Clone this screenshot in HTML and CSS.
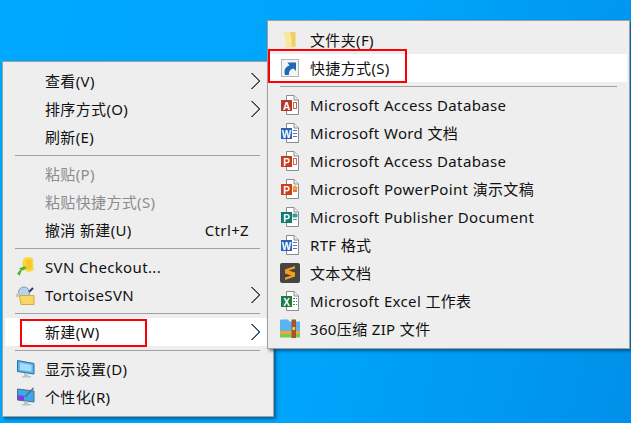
FILE: index.html
```html
<!DOCTYPE html>
<html lang="zh-CN">
<head>
  <meta charset="UTF-8">
  <title>新建</title>
  <meta name="viewport" content="width=device-width, initial-scale=1.0">
  <link rel="stylesheet" href="styles.css">
</head>
<body>

  <svg class="defs" width="0" height="0">
    <defs>
      <symbol id="chev" viewBox="0 0 10 18">
        <polyline points="1,1 9,9 1,17" fill="none" stroke="#e8a070" stroke-width="1"/>
        <polyline points="2,1 10,9 2,17" fill="none" stroke="#4a6a90" stroke-width="1"/>
        <polyline points="1.5,1 9.5,9 1.5,17" fill="none" stroke="#222" stroke-width="1"/>
      </symbol>
      <symbol id="chev-on" viewBox="0 0 10 18">
        <polyline points="1,1 9,9 1,17" fill="none" stroke="#e8a070" stroke-width="1"/>
        <polyline points="2,1 10,9 2,17" fill="none" stroke="#0090e0" stroke-width="1"/>
        <polyline points="1.5,1 9.5,9 1.5,17" fill="none" stroke="#123" stroke-width="1"/>
      </symbol>
      <symbol id="page" viewBox="0 0 20 20">
        <path d="M6.5 0.5H14L18.5 5V19.5H6.5Z" fill="#fff" stroke="#8c8c8c"/>
        <path d="M14 0.5V5H18.5" fill="#eee" stroke="#8c8c8c"/>
      </symbol>
    </defs>
  </svg>

  <div class="desktop">

    <!-- linkes Menue -->
    <div class="menu menu-main">
      <div class="item"><span class="ico"></span><span class="label">查看(V)</span><svg class="arrow"><use href="#chev"/></svg></div>
      <div class="item"><span class="ico"></span><span class="label">排序方式(O)</span><svg class="arrow"><use href="#chev"/></svg></div>
      <div class="item"><span class="ico"></span><span class="label">刷新(E)</span></div>
      <div class="sep"></div>
      <div class="item off"><span class="ico"></span><span class="label">粘贴(P)</span></div>
      <div class="item off"><span class="ico"></span><span class="label">粘贴快捷方式(S)</span></div>
      <div class="item"><span class="ico"></span><span class="label">撤消 新建(U)</span><span class="key">Ctrl+Z</span></div>
      <div class="sep"></div>
      <div class="item">
        <span class="ico">
          <svg width="20" height="20" viewBox="0 0 20 20">
            <path d="M9 1C12 0 16 0 18 1.5L18.5 13C16 15.5 12 15 10 13.5L7 7Z" fill="#fcd63c"/>
            <path d="M11 3H16.5V12H11Z" fill="#f5c728"/>
            <path d="M2 16.5L5.5 12.5L4 11.5L9.5 9L11.5 11L8 13.5L7 13L4.5 19Z" fill="#59b234"/>
          </svg>
        </span>
        <span class="label">SVN Checkout...</span>
      </div>
      <div class="item">
        <span class="ico">
          <svg width="20" height="20" viewBox="0 0 20 20">
            <circle cx="9" cy="7.5" r="5.5" fill="#b5d3ea" stroke="#7f9bb3"/>
            <path d="M14 7L18 3" stroke="#26406e" stroke-width="2"/>
            <path d="M1 9L5 8V12H1Z" fill="#c9c9c9"/>
            <path d="M4.5 10.5H19V19.5H6Z" fill="#f7d767" stroke="#d3ab3c"/>
          </svg>
        </span>
        <span class="label">TortoiseSVN</span>
        <svg class="arrow"><use href="#chev"/></svg>
      </div>
      <div class="sep"></div>
      <div class="item on"><span class="ico"></span><span class="label">新建(W)</span><svg class="arrow"><use href="#chev-on"/></svg></div>
      <div class="sep"></div>
      <div class="item">
        <span class="ico">
          <svg width="20" height="20" viewBox="0 0 20 20">
            <path d="M2.5 1.5L19 4.5V15L2.5 12.5Z" fill="#57b7f0" stroke="#2c6f9e"/>
            <path d="M5 4L16.5 6V12.5L5 11Z" fill="#a5dcfa"/>
            <path d="M9 14H13V17H16V18.5H7V17H9Z" fill="#b8c4cc"/>
          </svg>
        </span>
        <span class="label">显示设置(D)</span>
      </div>
      <div class="item">
        <span class="ico">
          <svg width="20" height="20" viewBox="0 0 20 20">
            <path d="M2.5 2L19 4V15L2.5 13Z" fill="#3ea8ee" stroke="#4c6f85"/>
            <path d="M3 8L9 9V13.5L3 13Z" fill="#7c3ce0"/>
            <path d="M10 10L18.5 1" stroke="#546e7a" stroke-width="1.5"/>
            <path d="M9 14.5H13V17H16V18.5H7V17H9Z" fill="#b8c4cc"/>
          </svg>
        </span>
        <span class="label">个性化(R)</span>
      </div>
    </div>

    <!-- Untermenue Neu -->
    <div class="menu menu-new">
      <div class="item">
        <span class="ico">
          <svg width="20" height="20" viewBox="0 0 20 20">
            <path d="M3 2.5L10 2L15.5 2.5V16.5L6 18C6 12 5.5 7 3 2.5Z" fill="#fbe69a"/>
            <path d="M10 2H15.5V16.5L11.5 17C12 11 11.5 6 10 2Z" fill="#f2ce68"/>
          </svg>
        </span>
        <span class="label">文件夹(F)</span>
      </div>
      <div class="item on">
        <span class="ico">
          <svg width="20" height="20" viewBox="0 0 20 20">
            <rect x="1.5" y="1.5" width="17" height="17" fill="#f4f4f4" stroke="#b4b4b4"/>
            <path d="M5 17C3.5 12 5.5 8.5 9.5 7.5L7.5 4.5H16V13L13.5 10.5C10.5 11 8.5 13.5 9 17Z" fill="#1f68b8"/>
          </svg>
        </span>
        <span class="label">快捷方式(S)</span>
      </div>
      <div class="sep"></div>
      <div class="item">
        <span class="ico">
          <svg width="20" height="20"><use href="#page"/><rect x="1" y="5" width="11" height="11" fill="#b7382a"/><text x="6.5" y="14.5" class="glyph">A</text><rect x="13.5" y="7.5" width="3" height="6" fill="none" stroke="#c8604e"/></svg>
        </span>
        <span class="label">Microsoft Access Database</span>
      </div>
      <div class="item">
        <span class="ico">
          <svg width="20" height="20"><use href="#page"/><rect x="1" y="5" width="11" height="11" fill="#2b63bd"/><text x="6.5" y="14.5" class="glyph">W</text><path d="M13 7.5H17M13 10.5H17M13 13.5H17" stroke="#3f79c8"/></svg>
        </span>
        <span class="label">Microsoft Word 文档</span>
      </div>
      <div class="item">
        <span class="ico">
          <svg width="20" height="20"><use href="#page"/><rect x="1" y="5" width="11" height="11" fill="#c43b22"/><text x="6.5" y="14.5" class="glyph">P</text><rect x="13.5" y="7.5" width="3" height="6" fill="none" stroke="#d06a50"/></svg>
        </span>
        <span class="label">Microsoft Access Database</span>
      </div>
      <div class="item">
        <span class="ico">
          <svg width="20" height="20"><use href="#page"/><rect x="1" y="5" width="11" height="11" fill="#c9401c"/><text x="6.5" y="14.5" class="glyph">P</text><circle cx="15" cy="9" r="2.5" fill="#f0a04a"/><rect x="13" y="11" width="4" height="2" fill="#e07a3a"/></svg>
        </span>
        <span class="label">Microsoft PowerPoint 演示文稿</span>
      </div>
      <div class="item">
        <span class="ico">
          <svg width="20" height="20"><use href="#page"/><rect x="1" y="5" width="11" height="11" fill="#0c7a72"/><text x="6.5" y="14.5" class="glyph">P</text><path d="M13 7H17V10H13ZM13 12.5H17" fill="#3c9c96" stroke="#3c9c96"/></svg>
        </span>
        <span class="label">Microsoft Publisher Document</span>
      </div>
      <div class="item">
        <span class="ico">
          <svg width="20" height="20"><use href="#page"/><rect x="1" y="5" width="11" height="11" fill="#2b63bd"/><text x="6.5" y="14.5" class="glyph">W</text><path d="M13 7.5H17M13 10.5H17M13 13.5H17" stroke="#3f79c8"/></svg>
        </span>
        <span class="label">RTF 格式</span>
      </div>
      <div class="item">
        <span class="ico">
          <svg width="20" height="20" viewBox="0 0 20 20">
            <rect width="20" height="20" rx="2" fill="#444"/>
            <path d="M15 3L5 6.5V10.5L11.5 12.5L5 14.5V17L15 13.5V9.5L8.5 7.5L15 5.5Z" fill="#f59e1b"/>
          </svg>
        </span>
        <span class="label">文本文档</span>
      </div>
      <div class="item">
        <span class="ico">
          <svg width="20" height="20"><use href="#page"/><rect x="1" y="5" width="11" height="11" fill="#1d7a45"/><text x="6.5" y="14.5" class="glyph">X</text><path d="M13 7.5H17M13 10.5H17M13 13.5H17" stroke="#2f8f5a" stroke-dasharray="2 1"/></svg>
        </span>
        <span class="label">Microsoft Excel 工作表</span>
      </div>
      <div class="item">
        <span class="ico">
          <svg width="20" height="20" viewBox="0 0 20 20">
            <path d="M0 2C0 1 0.5 0.5 1.5 0.5H8L9.5 2.5H20V12H0Z" fill="#58b4ee"/>
            <rect y="12" width="20" height="3" fill="#f2a53a"/>
            <rect y="15" width="20" height="3.5" fill="#7ec850"/>
            <rect x="11.5" y="0.5" width="4.5" height="18.5" fill="#a3562c"/>
            <rect x="12.5" y="8" width="2.5" height="3" fill="#f4d24a"/>
          </svg>
        </span>
        <span class="label">360压缩 ZIP 文件</span>
      </div>
    </div>

    <!-- rote Markierungen -->
    <div class="mark mark-new"></div>
    <div class="mark mark-link"></div>

  </div>

</body>
</html>
```

FILE: styles.css
```css
/* Grundlayout */
body {
  margin: 0;
  font-family: "Noto Sans", "Noto Sans CJK SC", sans-serif;
  font-size: 15px;
  line-height: 20px;
  letter-spacing: 0.35px;
  color: #111;
}
.defs {
  display: block;
  height: 0;
}
.desktop {
  position: relative;
  width: 631px;
  height: 423px;
  overflow: hidden;
  background: linear-gradient(105deg, #00a8ff 0%, #00a4fa 55%, #0090ea 100%);
}
/* Menues */
.menu {
  position: absolute;
  box-sizing: border-box;
  display: flex;
  flex-direction: column;
  padding: 5px 2px;
  background: #eeeeee;
  border: 1px solid #a0a0a0;
  box-shadow: 2px 2px 3px rgba(0, 40, 70, 0.55);
}
.menu-main {
  left: 2px;
  top: 61px;
  width: 272px;
  height: 356px;
}
.menu-new {
  left: 267px;
  top: 20px;
  width: 363px;
  height: 329px;
}
.item {
  display: flex;
  align-items: center;
  height: 28px;
  flex: none;
}
.item.on {
  background: #fff;
}
.item.off {
  color: #8c8c8c;
}
.ico {
  flex: none;
  display: flex;
  align-items: center;
  width: 40px;
  box-sizing: border-box;
  padding-left: 10px;
  height: 28px;
}
.label {
  flex: 1;
  white-space: nowrap;
}
.key {
  margin-right: 22px;
}
.arrow {
  width: 10px;
  height: 18px;
  margin-right: 11px;
}
.sep {
  flex: none;
  height: 1px;
  margin: 4px 11px 4px 10px;
  background: #a0a0a0;
}
.menu-new .sep {
  margin: 4px 10px;
}
.glyph {
  font-family: "Liberation Sans", sans-serif;
  font-size: 10px;
  font-weight: bold;
  letter-spacing: 0;
  fill: #fff;
  text-anchor: middle;
}
/* rote Rahmen */
.mark {
  position: absolute;
  box-sizing: border-box;
  border: 2px solid #f00;
}
.mark-new {
  left: 20px;
  top: 319px;
  width: 127px;
  height: 28px;
}
.mark-link {
  left: 268px;
  top: 49px;
  width: 139px;
  height: 34px;
}
```
